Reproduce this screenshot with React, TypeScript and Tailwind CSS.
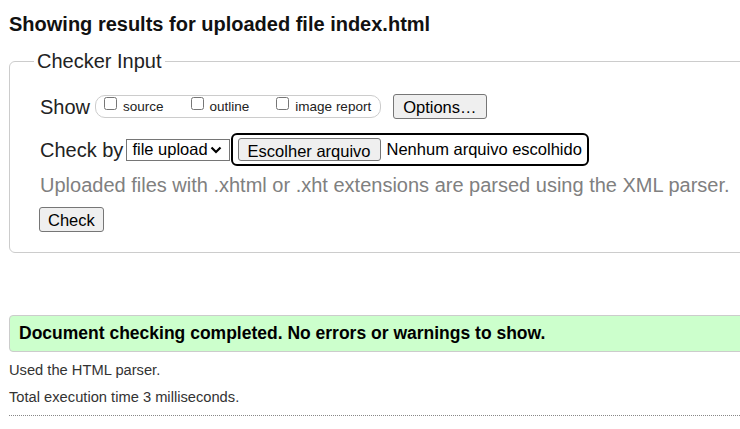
import React from 'react';

function Checkbox({ label, last }: { label: string; last?: boolean }) {
  return (
    <label className={`flex items-center ${last ? '' : 'mr-[27px]'}`}>
      <input type="checkbox" className="w-[13px] h-[13px] mb-[6px]" />
      <span className="ml-[6px] text-[13.5px] leading-[16px]">{label}</span>
    </label>
  );
}

function App() {
  return (
    <div className="w-[740px] h-[429px] overflow-hidden bg-white text-[#222] font-['Liberation_Sans',Arial,sans-serif]">
      <div className="w-[800px] pl-[9px]">
        <h2 className="pt-[12px] text-[20px] leading-[24px] font-bold text-[#111]">
          Showing results for uploaded file index.html
        </h2>

        <fieldset className="mt-[14px] border border-[#cccccc] rounded-[6px] pl-[24px] pb-[19px]">
          <legend className="px-[3px] text-[20px] leading-[22px]">Checker Input</legend>
          <div className="pl-[6px]">
            <div className="mt-[22px] flex items-center h-[25px] text-[20px]">
              <span>Show</span>
              <span className="ml-[5px] flex items-center h-[23px] border border-[#cccccc] rounded-[10px] pl-[8px] pr-[9px]">
                <Checkbox label="source" />
                <Checkbox label="outline" />
                <Checkbox label="image report" last />
              </span>
              <button className="ml-[12px] h-[25px] px-[9px] text-[16.5px] bg-[#efefef] border border-[#767676] rounded-[3px] text-black">
                Options…
              </button>
            </div>

            <div className="mt-[14px] flex items-center h-[33px] text-[20px]">
              <span>Check by</span>
              <span className="ml-[3px] flex items-center h-[22px] border border-[#767676] pl-[5px] pr-[7px] text-[16.5px] text-black">
                file upload
                <svg width="12" height="8" viewBox="0 0 12 8" className="ml-[2px]">
                  <path d="M1.5 1.5 L6 6 L10.5 1.5" fill="none" stroke="#000" strokeWidth="2.2" />
                </svg>
              </span>
              <span className="ml-[1px] flex items-center h-[33px] border-2 border-black rounded-[6px] px-[5px] text-[16.5px] text-black">
                <button className="h-[23px] px-[9px] bg-[#efefef] border border-[#767676] rounded-[3px]">
                  Escolher arquivo
                </button>
                <span className="ml-[6px]">Nenhum arquivo escolhido</span>
              </span>
            </div>

            <p className="mt-[7px] text-[20px] leading-[24px] text-[#808080]">
              Uploaded files with .xhtml or .xht extensions are parsed using the XML parser.
            </p>

            <button className="mt-[10px] -ml-[1px] h-[25px] px-[8px] text-[16.5px] bg-[#efefef] border border-[#767676] rounded-[3px] text-black">
              Check
            </button>
          </div>
        </fieldset>

        <div className="mt-[62px] h-[37px] flex items-center border border-[#cccccc] rounded-l-[4px] bg-[#ccffcc] pl-[9px] text-[17.5px] font-bold text-black">
          Document checking completed. No errors or warnings to show.
        </div>

        <p className="mt-[9px] text-[14.7px] leading-[18px] text-[#333]">Used the HTML parser.</p>
        <p className="mt-[9px] text-[14.7px] leading-[18px] text-[#333]">Total execution time 3 milliseconds.</p>
        <div className="mt-[9px] border-t border-dotted border-[#888]" />
      </div>
    </div>
  );
}

export default App;
